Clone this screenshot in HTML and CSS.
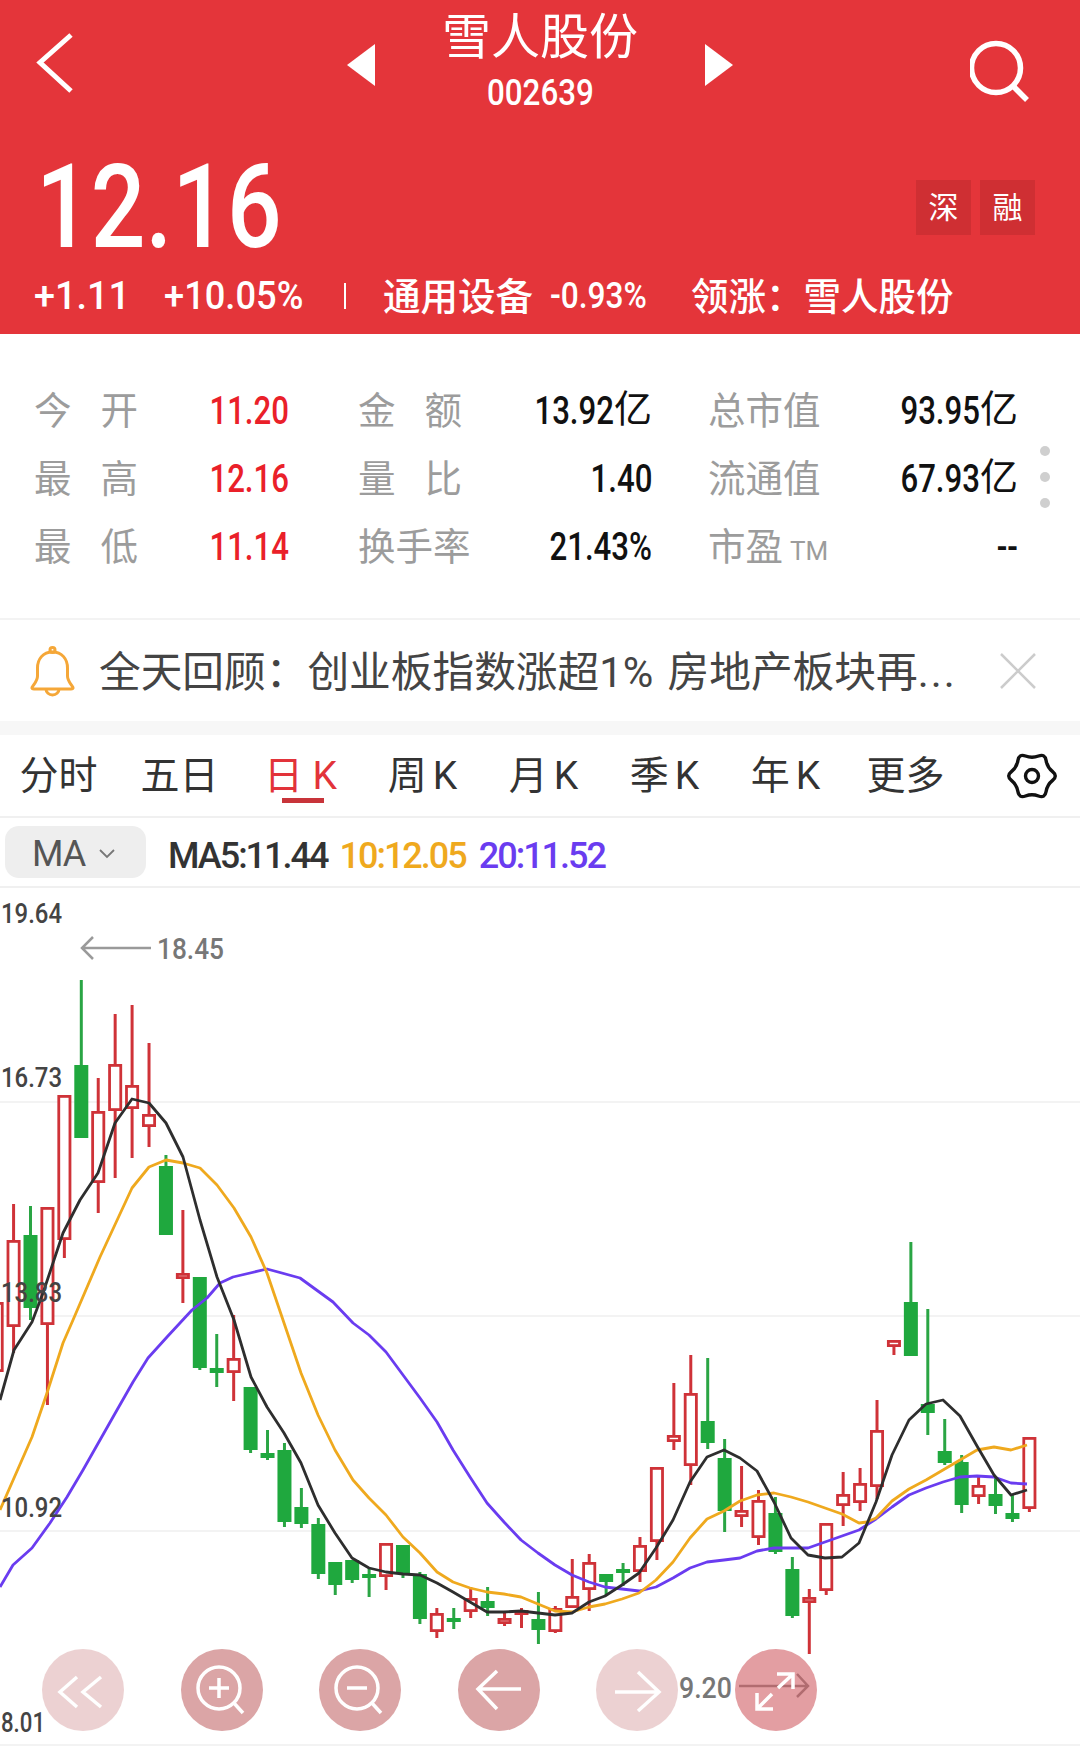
FILE: index.html
```html
<!DOCTYPE html>
<html>
<head>
<meta charset="utf-8">
<title>雪人股份</title>
<link rel="stylesheet" href="styles.css">
</head>
<body>
<div class="head">
	<div class="topbar">
		<svg class="side" viewBox="0 0 110 157"><path d="M71 35 40 62.500 71 91" fill="none" stroke="#fff" stroke-width="5"/></svg>
		<div class="switch">
			<i class="tri tri-l"></i>
			<div class="name">
				<div class="name-cn">雪人股份</div>
				<div class="name-code"><span class="num">002639</span></div>
			</div>
			<i class="tri tri-r"></i>
		</div>
		<svg class="side" viewBox="0 0 110 157"><circle cx="26" cy="68" r="24.500" fill="none" stroke="#fff" stroke-width="5.500"/><path d="M43 86 57 100" stroke="#fff" stroke-width="5.500"/></svg>
	</div>
	<div class="price-row">
		<span class="price">12.16</span>
		<div class="tags"><span class="tag">深</span><span class="tag">融</span></div>
	</div>
	<div class="sub">
		<span class="sub-a"><span class="num">+1.11</span></span>
		<span class="sub-b"><span class="num">+10.05%</span></span>
		<span class="sub-sep"></span>
		<span class="sub-c">通用设备</span>
		<span class="sub-d"><span class="num">-0.93%</span></span>
		<span class="sub-e">领涨：雪人股份</span>
	</div>
</div>

<div class="stats">
	<div class="stat-row">
		<div class="stat s1"><span class="lab lab-j">今开</span><span class="val up"><span class="num-r">11.20</span></span></div>
		<div class="stat s2"><span class="lab lab-j">金额</span><span class="val"><span class="num-r">13.92</span>亿</span></div>
		<div class="stat s3"><span class="lab">总市值</span><span class="val"><span class="num-r">93.95</span>亿</span></div>
	</div>
	<div class="stat-row">
		<div class="stat s1"><span class="lab lab-j">最高</span><span class="val up"><span class="num-r">12.16</span></span></div>
		<div class="stat s2"><span class="lab lab-j">量比</span><span class="val"><span class="num-r">1.40</span></span></div>
		<div class="stat s3"><span class="lab">流通值</span><span class="val"><span class="num-r">67.93</span>亿</span></div>
	</div>
	<div class="stat-row">
		<div class="stat s1"><span class="lab lab-j">最低</span><span class="val up"><span class="num-r">11.14</span></span></div>
		<div class="stat s2"><span class="lab">换手率</span><span class="val"><span class="num-r">21.43%</span></span></div>
		<div class="stat s3"><span class="lab">市盈<small>TM</small></span><span class="val"><span class="num-r">--</span></span></div>
	</div>
	<div class="more"><i></i><i></i><i></i></div>
</div>

<div class="notice">
	<svg class="bell" viewBox="0 0 50 52" fill="none" stroke="#f5a738" stroke-width="3">
		<path d="M24.500 7C15 7 9.500 14 9.500 23V31C9.500 36 6 39 4 42.500Q3.500 44 6 44H43Q45.500 44 45 42.500C43 39 39.500 36 39.500 31V23C39.500 14 34 7 24.500 7Z"/>
		<circle cx="24.500" cy="5" r="2.500"/>
		<path d="M18 44a6.500 6 0 0 0 13 0"/>
	</svg>
	<span class="notice-text">全天回顾：创业板指数涨超1% 房地产板块再<span class="dots">...</span></span>
	<svg class="close" viewBox="0 0 36 36" stroke="#ccc" stroke-width="2.500"><path d="M1 1 35 35M35 1 1 35"/></svg>
</div>

<div class="tabs">
	<span class="tab">分时</span>
	<span class="tab">五日</span>
	<span class="tab tab-on">日 K</span>
	<span class="tab tab-k">周K</span>
	<span class="tab tab-k">月K</span>
	<span class="tab tab-k">季K</span>
	<span class="tab tab-k">年K</span>
	<span class="tab">更多</span>
	<svg class="gear" viewBox="0 0 50 50" fill="none" stroke="#111" stroke-width="3.400">
		<path d="M45.600 20.600Q51 25 45.600 29.400Q40.150 33.750 39.100 40.600Q38 47.500 31.500 45Q25 42.500 18.500 45Q12 47.500 10.900 40.600Q9.850 33.750 4.400 29.400Q-1 25 4.400 20.600Q9.850 16.250 10.900 9.400Q12 2.500 18.500 5Q25 7.500 31.500 5Q38 2.500 39.100 9.400Q40.150 16.250 45.600 20.600Z"/>
		<circle cx="25" cy="25" r="6.500"/>
	</svg>
</div>

<div class="ma-bar">
	<div class="ma-chip">MA<svg class="ma-arrow" viewBox="0 0 16 10" fill="none" stroke="#777" stroke-width="1.800"><path d="M1 1 8 8 15 1"/></svg></div>
	<span class="ma ma5">MA5:11.44</span>
	<span class="ma ma10">10:12.05</span>
	<span class="ma ma20">20:11.52</span>
</div>

<div class="chart">
	<svg id="kline" class="kline" viewBox="0 888 1080 865">
		<g class="grid">
			<line x1="0" x2="1080" y1="1102" y2="1102"/>
			<line x1="0" x2="1080" y1="1316" y2="1316"/>
			<line x1="0" x2="1080" y1="1531" y2="1531"/>
			<line x1="0" x2="1080" y1="1745" y2="1745"/>
		</g>
		<g id="candles"></g>
		<g id="lines" fill="none" stroke-width="2.800" stroke-linejoin="round"></g>
		<g class="axis">
			<text x="1" y="923" textLength="61" lengthAdjust="spacingAndGlyphs">19.64</text>
			<text x="1" y="1087" textLength="61" lengthAdjust="spacingAndGlyphs">16.73</text>
			<text x="1" y="1302" textLength="61" lengthAdjust="spacingAndGlyphs">13.83</text>
			<text x="1" y="1517" textLength="61" lengthAdjust="spacingAndGlyphs">10.92</text>
			<text x="1" y="1732" textLength="44" lengthAdjust="spacingAndGlyphs">8.01</text>
		</g>
		<g class="mark">
			<path d="M151 948H83M93 937 82 948 93 959"/>
			<text x="157" y="959" textLength="67" lengthAdjust="spacingAndGlyphs">18.45</text>
			<text x="679" y="1698" textLength="53" lengthAdjust="spacingAndGlyphs">9.20</text>
			<path d="M739 1686H807M797 1674 808 1686 797 1697"/>
		</g>
	</svg>
	<div class="tools">
		<span class="tool tool-dim"><svg viewBox="0 0 82 82"><path d="M35 28 18 43 35 58M59 28 41 43 59 58"/></svg></span>
		<span class="tool"><svg viewBox="0 0 82 82"><circle cx="38" cy="39" r="21"/><path d="M28 39H48M38 29V49M52 53 62 64"/></svg></span>
		<span class="tool"><svg viewBox="0 0 82 82"><circle cx="38" cy="39" r="21"/><path d="M28 39H48M52 53 62 64"/></svg></span>
		<span class="tool"><svg viewBox="0 0 82 82"><path d="M63 40H20M39 22 20 40 39 60"/></svg></span>
		<span class="tool tool-dim"><svg viewBox="0 0 82 82"><path d="M19 43H63M42 23 63 43 42 62"/></svg></span>
		<span class="tool tool-full"><svg viewBox="0 0 82 82"><path d="M42 25H58V40M58 25 43 39M38 60H22V44M22 60 37 45"/></svg></span>
	</div>
</div>
<script src="chart.js"></script>
</body>
</html>
```

FILE: styles.css
```css
*{margin:0;padding:0;box-sizing:border-box;}
html,body{width:1080px;height:1753px;overflow:hidden;background:#fff;font-family:Roboto,"Noto Sans CJK SC",sans-serif;}
svg{display:block;}
i{display:block;font-style:normal;}

.head{height:334px;background:#e4353a;color:#fff;}
.topbar{display:flex;justify-content:space-between;height:157px;}
.side{width:110px;height:157px;}
.switch{display:flex;justify-content:space-between;width:387px;height:130px;}
.tri{width:0;height:0;margin-top:44px;border-top:21px solid transparent;border-bottom:21px solid transparent;}
.tri-l{border-right:28px solid #fff;}
.tri-r{border-left:28px solid #fff;}
.name{text-align:center;}
.name-cn{font-size:49px;line-height:52px;margin-top:12px;}
.name-code{font-size:36px;line-height:40px;margin-top:9px;font-weight:500;}
.num{display:inline-block;transform:scaleX(.87);}

.price-row{display:flex;justify-content:space-between;align-items:center;height:100px;padding:0 45px 0 36px;}
.price{display:inline-block;font-size:116px;line-height:100px;font-weight:500;transform:scaleX(.83);transform-origin:left center;}
.tags{display:flex;gap:9px;}
.tag{width:55px;height:55px;background:#cf2f33;font-size:30px;line-height:55px;text-align:center;}

.sub{display:flex;align-items:center;height:77px;padding-left:34px;font-size:37.500px;font-weight:500;}
.sub .num{transform:scaleX(.97);transform-origin:left center;}
.sub-a{width:130px;font-size:39px;}
.sub-b{width:180px;font-size:39px;}
.sub-b .num{transform:scaleX(.93);}
.sub-sep{width:2px;height:26px;margin-right:37px;background:#fff;}
.sub-c{width:167px;margin-top:-4px;}
.sub-d{width:141px;font-size:36px;}
.sub-d .num{transform:scaleX(.88);}
.sub-e{margin-top:-4px;white-space:nowrap;}

.stats{position:relative;height:286px;padding:39px 0 0 34px;border-bottom:2px solid #f3f3f3;}
.stat-row{display:flex;height:68.200px;align-items:center;}
.stat{display:flex;justify-content:space-between;align-items:center;}
.s1{width:255px;margin-right:69px;}
.s2{width:294px;margin-right:56px;}
.s3{width:310px;}
.lab{font-size:37.500px;color:#9c9c9c;white-space:nowrap;}
.lab-j{width:104px;text-align-last:justify;}
.lab small{font-size:26px;margin-left:7px;}
.val{display:flex;align-items:center;margin-top:4px;font-size:38px;line-height:44px;color:#111;white-space:nowrap;}
.val.up{color:#ea2029;}
.num-r{display:block;transform:translateY(2px) scaleX(.82);transform-origin:right center;font-weight:500;}
.more{position:absolute;left:1040px;top:112px;}
.more i{width:10px;height:10px;margin-bottom:16px;border-radius:50%;background:#cfcfcf;}

.notice{display:flex;align-items:center;height:115px;padding-left:28px;padding-bottom:4px;border-bottom:14px solid #f7f7f7;}
.bell{width:50px;height:52px;margin-top:4px;}
.notice-text{width:900px;margin-left:21px;font-size:41.700px;word-spacing:4px;color:#444;white-space:nowrap;}
.dots{letter-spacing:2px;}
.close{width:36px;height:36px;margin:4px 0 0 1px;}

.tabs{display:flex;align-items:center;position:relative;height:83px;padding-bottom:7px;border-bottom:2px solid #f0f0f0;}
.tab{width:121px;font-size:39px;color:#333;text-align:center;white-space:nowrap;}
.tab-k{padding-left:8px;letter-spacing:6px;}
.tab:first-child{margin-left:-2px;}
.tab-on{position:relative;color:#e2333a;}
.tab-on:after{content:"";position:absolute;left:42px;top:54px;width:42px;height:5px;background:#c8343a;}
.gear{position:absolute;left:1007px;top:16px;width:50px;height:50px;overflow:visible;}

.ma-bar{display:flex;align-items:center;height:70px;border-bottom:2px solid #f0f0f0;font-size:36px;}
.ma-chip{display:flex;align-items:center;width:141px;height:52px;margin-left:5px;padding:3px 0 0 27px;background:#eee;border-radius:14px;color:#555;letter-spacing:-1px;}
.ma-arrow{width:16px;height:10px;margin-left:14px;}
.ma{margin-left:23px;padding-top:7px;letter-spacing:-2px;font-weight:500;white-space:nowrap;}
.ma5{margin-left:22px;color:#333;}
.ma10{margin-left:12px;color:#efa91e;}
.ma20{margin-left:13px;color:#6a3cf0;}

.chart{position:relative;height:865px;}
.kline{width:1080px;height:865px;}
.grid line{stroke:#f3f3f3;stroke-width:2;}
.axis text{font-size:27px;font-weight:500;fill:#444;}
.mark text{font-size:30px;font-weight:500;fill:#777;}
.mark path{fill:none;stroke:#9a9a9a;stroke-width:2.500;}
.tools{position:absolute;left:42px;top:761px;display:flex;gap:56.600px;}
.tool{display:block;width:82px;height:82px;border-radius:50%;background:rgba(184,75,77,.5);}
.tool-dim{opacity:.5;}
.tool-full{background:rgba(200,61,69,.5);}
.tool svg{width:82px;height:82px;fill:none;stroke:#fff;stroke-width:3.500;}
```

FILE: chart.js
```js
// [index, r/g, high, top, bottom, low]
var candles = [
	[-5,'r',1302,1302,1372,1372],[-4,'r',1204,1240,1327,1353],[-3,'g',1206,1235,1308,1320],[-2,'r',1207,1207,1325,1405],
	[-1,'r',1095,1095,1240,1258],[0,'g',980,1065,1138,1138],[1,'r',1078,1111,1183,1213],[2,'r',1014,1064,1111,1178],
	[3,'r',1005,1085,1109,1158],[4,'r',1043,1114,1127,1147],[5,'g',1155,1166,1235,1235],[6,'r',1210,1273,1279,1303],
	[7,'g',1277,1277,1368,1370],[8,'g',1334,1368,1373,1387],[9,'r',1315,1358,1373,1401],[10,'g',1387,1387,1450,1453],
	[11,'g',1430,1453,1458,1460],[12,'g',1443,1450,1522,1527],[13,'g',1488,1507,1524,1528],[14,'g',1518,1524,1574,1579],
	[15,'g',1562,1562,1585,1595],[16,'g',1560,1560,1580,1583],[17,'g',1569,1574,1578,1597],[18,'r',1543,1543,1577,1590],
	[19,'g',1545,1545,1573,1578],[20,'g',1572,1574,1619,1624],[21,'r',1608,1613,1632,1638],[22,'g',1608,1618,1622,1629],
	[23,'r',1587,1598,1612,1618],[24,'g',1587,1601,1608,1616],[25,'r',1613,1618,1624,1626],[26,'r',1608,1610,1615,1628],
	[27,'g',1592,1619,1630,1644],[28,'r',1606,1608,1632,1633],[29,'r',1559,1596,1608,1608],[30,'r',1554,1562,1590,1611],
	[31,'g',1574,1574,1582,1595],[32,'g',1563,1569,1573,1586],[33,'r',1537,1545,1572,1582],[34,'r',1467,1467,1542,1560],
	[35,'r',1383,1435,1442,1450],[36,'r',1355,1393,1466,1485],[37,'g',1358,1421,1443,1449],[38,'g',1439,1458,1511,1532],
	[39,'r',1466,1510,1517,1527],[40,'r',1490,1500,1538,1545],[41,'g',1497,1513,1552,1554],[42,'g',1557,1569,1616,1618],
	[43,'r',1589,1597,1603,1654],[44,'r',1523,1523,1591,1595],[45,'r',1472,1494,1506,1526],[46,'r',1468,1483,1503,1511],
	[47,'r',1400,1430,1487,1499],[48,'r',1340,1340,1347,1355],[49,'g',1242,1302,1356,1356],[50,'g',1309,1404,1413,1435],
	[51,'g',1419,1451,1463,1465],[52,'g',1455,1462,1505,1513],[53,'r',1475,1485,1497,1504],[54,'g',1477,1494,1506,1514],
	[55,'g',1495,1513,1519,1522],[56,'r',1437,1437,1509,1512]
];

var ma5 = '0,1400 14,1350 32,1322 43,1293 63,1233 80,1200 98,1173 115,1123 132,1099 149,1103 166,1123 183,1157 200,1220 217,1277 234,1320 251,1377 267,1407 284,1433 301,1463 318,1505 335,1533 352,1558 369,1568 386,1572 403,1574 420,1575 437,1583 453,1592 470,1602 487,1612 504,1612 521,1611 538,1613 555,1615 572,1613 589,1602 605,1596 622,1585 639,1573 656,1548 673,1520 690,1482 707,1457 724,1450 740,1458 757,1471 774,1502 791,1538 808,1555 825,1558 842,1557 859,1543 876,1502 892,1455 909,1420 926,1404 943,1400 960,1416 977,1446 994,1475 1011,1495 1027,1490';
var ma10 = '0,1510 32,1437 47,1393 63,1343 73,1320 100,1257 132,1188 149,1167 166,1160 183,1163 200,1168 217,1185 234,1208 251,1237 267,1273 283,1320 301,1373 318,1415 335,1450 353,1480 369,1498 386,1515 403,1537 420,1553 437,1572 453,1582 470,1588 487,1592 504,1594 521,1597 538,1604 555,1611 572,1612 589,1607 605,1604 622,1599 639,1593 656,1580 673,1562 690,1538 707,1519 724,1511 740,1501 757,1495 774,1493 791,1497 808,1502 825,1508 842,1514 859,1523 867,1522 876,1518 892,1501 909,1489 926,1480 943,1470 960,1460 977,1450 994,1447 1011,1450 1027,1445';
var ma20 = '0,1587 13,1565 32,1548 50,1523 67,1497 83,1470 100,1440 117,1410 133,1382 148,1358 167,1337 192,1310 207,1298 220,1283 233,1277 267,1269 300,1278 333,1302 353,1323 369,1335 386,1352 403,1375 420,1398 437,1422 453,1450 470,1477 487,1503 504,1522 521,1540 538,1553 555,1565 572,1575 589,1582 605,1587 622,1589 639,1591 656,1587 673,1578 690,1568 707,1562 724,1560 740,1558 757,1551 774,1548 791,1548 808,1548 825,1542 842,1536 859,1530 876,1519 892,1507 909,1495 926,1488 943,1482 960,1477 977,1476 994,1477 1011,1483 1027,1484';

function el(name, attrs, parent) {
	var node = document.createElementNS('http://www.w3.org/2000/svg', name);
	for (var k in attrs) node.setAttribute(k, attrs[k]);
	parent.appendChild(node);
	return node;
}

var box = document.getElementById('candles');
for (var i = 0; i < candles.length; i++) {
	var c = candles[i];
	var x = 81.3 + 16.93 * c[0];
	var color = c[1] == 'r' ? '#cf3238' : '#1fa83e';
	el('line', {x1: x, x2: x, y1: c[2], y2: c[5], stroke: c[1] == 'r' ? '#cf3238' : '#2aa544', 'stroke-width': 3}, box);
	if (c[1] == 'r') {
		el('rect', {x: x - 5.6, y: c[3] + 1.4, width: 11.2, height: Math.max(c[4] - c[3] - 2.8, 1), fill: '#fff', stroke: color, 'stroke-width': 2.8}, box);
	} else {
		el('rect', {x: x - 7, y: c[3], width: 14, height: c[4] - c[3], fill: color}, box);
	}
}

var lines = document.getElementById('lines');
el('polyline', {points: ma20, stroke: '#6a3cf0'}, lines);
el('polyline', {points: ma10, stroke: '#efa91e'}, lines);
el('polyline', {points: ma5, stroke: '#2e2e2e'}, lines);
```
